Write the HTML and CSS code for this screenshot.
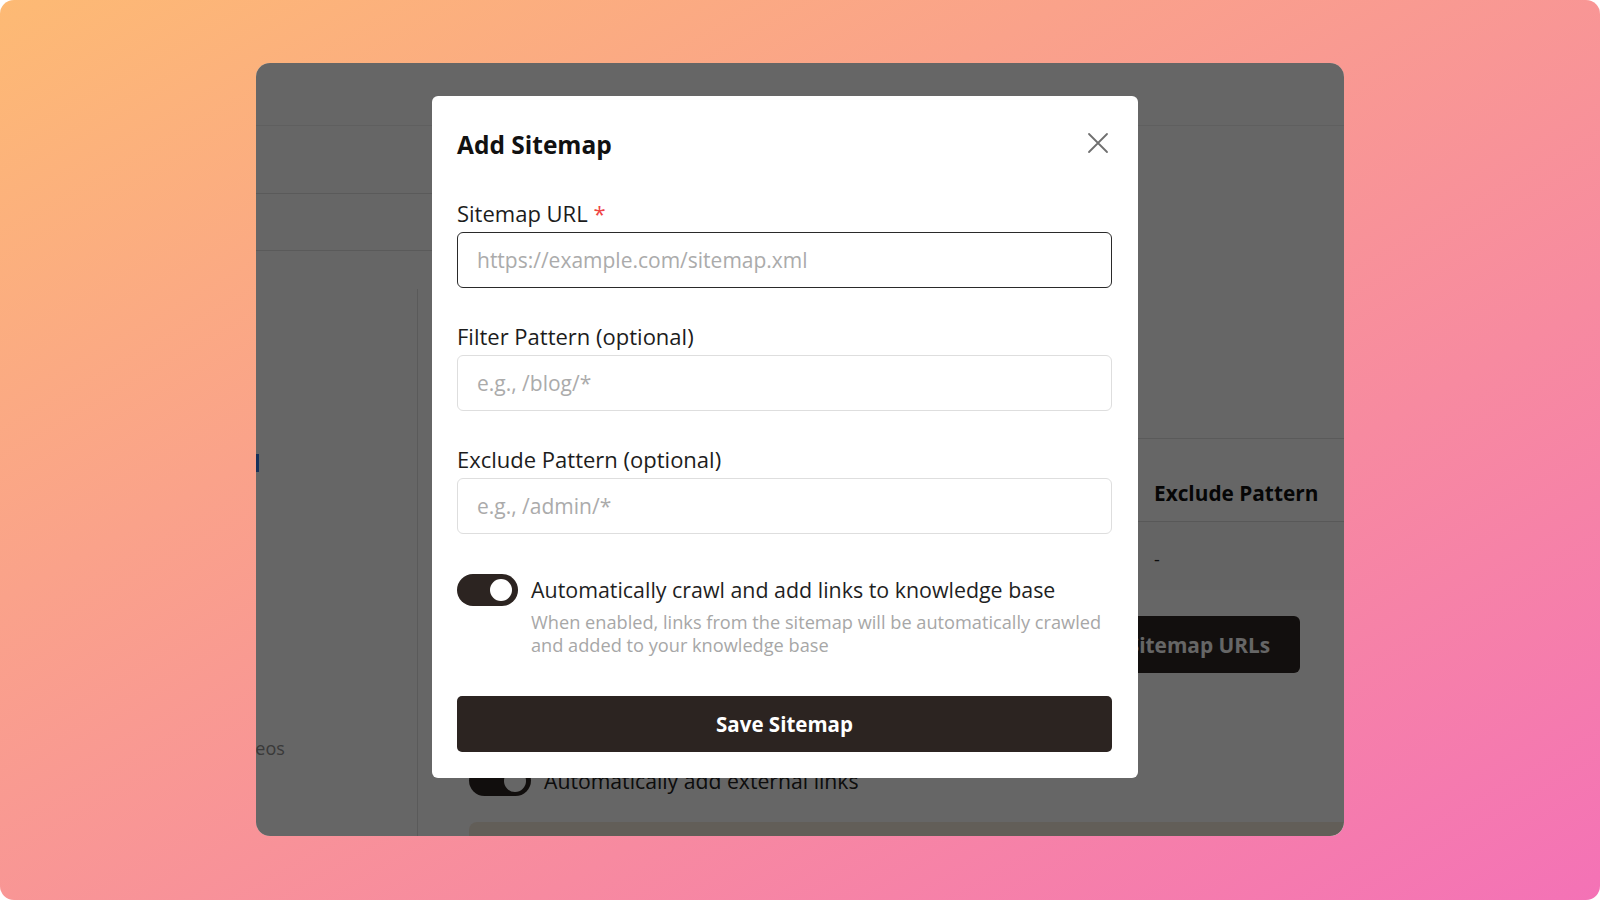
FILE: index.html
```html
<!DOCTYPE html>
<html lang="en">
<head>
<meta charset="utf-8">
<title>Add Sitemap</title>
<link rel="stylesheet" href="styles.css">
</head>
<body>
<div class="bg">
  <div class="window">
    <div class="app">
      <div class="app-header"></div>
      <div class="app-nav">
        <div class="nav-row nav-row-1"></div>
        <div class="nav-row nav-row-2"></div>
      </div>
      <div class="app-body">
        <aside class="sidebar">
          <div class="side-active"></div>
          <div class="side-item">Videos</div>
        </aside>
        <main class="main">
          <div class="table">
            <div class="t-head">
              <div class="t-cell c1"></div>
              <div class="t-cell c2"></div>
              <div class="t-cell c3">Exclude Pattern</div>
            </div>
            <div class="t-row">
              <div class="t-cell c1"></div>
              <div class="t-cell c2"></div>
              <div class="t-cell c3">-</div>
            </div>
          </div>
          <div class="main-actions">
            <button class="bg-btn">Fetch Sitemap URLs</button>
          </div>
          <div class="bg-toggle-row">
            <span class="bg-toggle"><span class="bg-knob"></span></span>
            <span class="bg-toggle-text">Automatically add external links</span>
          </div>
          <div class="bg-band"></div>
        </main>
      </div>
    </div>

    <div class="overlay">
      <div class="modal">
        <div class="modal-head">
          <h2 class="modal-title">Add Sitemap</h2>
          <button class="close" aria-label="Close">
            <svg width="24" height="24" viewBox="0 0 24 24" fill="none" stroke="#6f6f6f" stroke-width="1.8" stroke-linecap="round"><path d="M3 3L21 21M21 3L3 21"/></svg>
          </button>
        </div>
        <div class="form">
          <div class="field">
            <label class="label">Sitemap URL <span class="req">*</span></label>
            <div class="input input-focus"><span class="ph">https://example.com/sitemap.xml</span></div>
          </div>
          <div class="field">
            <label class="label">Filter Pattern (optional)</label>
            <div class="input"><span class="ph">e.g., /blog/*</span></div>
          </div>
          <div class="field">
            <label class="label">Exclude Pattern (optional)</label>
            <div class="input"><span class="ph">e.g., /admin/*</span></div>
          </div>
        </div>
        <div class="switch-row">
          <span class="switch"><span class="knob"></span></span>
          <div class="switch-text">
            <div class="switch-label">Automatically crawl and add links to knowledge base</div>
            <div class="switch-help">When enabled, links from the sitemap will be automatically crawled<br>and added to your knowledge base</div>
          </div>
        </div>
        <button class="save">Save Sitemap</button>
      </div>
    </div>
  </div>
</div>
</body>
</html>
```
FILE: styles.css
```css
* { box-sizing: border-box; }
html, body { margin: 0; padding: 0; background: #ffffff; }
body { font-family: "Open Sans", "Noto Sans", sans-serif; }

.bg {
  width: 1600px;
  height: 900px;
  border-radius: 14px;
  background: linear-gradient(to bottom right, #fdba74, #f472b6);
  padding: 63px 256px 64px 256px;
}

.window {
  position: relative;
  width: 1088px;
  height: 773px;
  border-radius: 14px;
  overflow: hidden;
  background: #ffffff;
}

/* ---------- background app ---------- */
.app { display: flex; flex-direction: column; height: 100%; }
.app-header { height: 63px; border-bottom: 1px solid #eeeeee; flex: none; }
.app-nav { width: 760px; flex: none; }
.nav-row { border-bottom: 1px solid #e0e0e0; }
.nav-row-1 { height: 68px; }
.nav-row-2 { height: 57px; }

.app-body { flex: 1; display: flex; margin-top: 38px; min-height: 0; }
.sidebar {
  width: 162px;
  flex: none;
  border-right: 1px solid #e2e2e2;
  display: flex;
  flex-direction: column;
}
.side-active {
  width: 3px;
  height: 18px;
  margin-top: 165px;
  background: #3b7be0;
}
.side-item {
  margin-top: 264px;
  margin-left: -27px;
  font-size: 18px;
  line-height: 24px;
  color: #8f8f8f;
  white-space: nowrap;
}

.main { flex: 1; min-width: 0; padding: 149px 44px 0 51px; display: flex; flex-direction: column; }
.table { width: 1100px; border-top: 1px solid #e2e2e2; flex: none; }
.t-head { display: flex; align-items: center; height: 83px; border-bottom: 1px solid #dcdcdc; }
.t-row { display: flex; align-items: center; height: 68px; background: #fafafa; }
.t-cell { white-space: nowrap; flex: none; }
.t-head .t-cell { font-weight: 700; font-size: 20.8px; line-height: 28px; color: #111111; padding-top: 26px; }
.t-row .t-cell { font-size: 18px; line-height: 24px; color: #222222; padding-top: 6px; }
.c1 { width: 340px; }
.c2 { width: 344px; }
.c3 { width: 300px; padding-left: 1px; }

.main-actions { display: flex; justify-content: flex-end; margin-top: 26px; }
.bg-btn {
  height: 57px;
  padding: 0 30px;
  border: none;
  border-radius: 6px;
  background: #2e2623;
  color: #ffffff;
  font-family: inherit;
  font-weight: 700;
  font-size: 20.8px;
}

.bg-toggle-row { display: flex; align-items: center; gap: 13px; margin-top: 92px; }
.bg-toggle {
  width: 62px; height: 31px; border-radius: 16px; background: #2c2421;
  display: flex; align-items: center; justify-content: flex-end; padding-right: 5px;
}
.bg-knob { width: 22px; height: 22px; border-radius: 50%; background: #ffffff; }
.bg-toggle-text { font-size: 21.2px; color: #222222; line-height: 30px; }

.bg-band {
  margin-top: 26px;
  height: 40px;
  margin-right: -60px;
  border-radius: 8px 0 0 0;
  background: #f6eadd;
}

/* ---------- overlay + modal ---------- */
.overlay {
  position: absolute;
  inset: 0;
  background: rgba(0, 0, 0, 0.6);
  padding: 33px 0 0 176px;
}

.modal {
  width: 706px;
  height: 682px;
  background: #ffffff;
  border-radius: 6px;
  padding: 32px 26px 26px 25px;
  display: flex;
  flex-direction: column;
}

.modal-head { display: flex; align-items: center; justify-content: space-between; height: 34px; }
.modal-title {
  margin: 0;
  font-size: 24.5px;
  line-height: 34px;
  font-weight: 700;
  color: #111111;
}
.close {
  width: 24px; height: 24px; padding: 0; margin-right: 2px; margin-top: -4px;
  border: none; background: none; display: flex;
}

.form { margin-top: 36px; display: flex; flex-direction: column; gap: 33px; }
.field { display: flex; flex-direction: column; gap: 4px; }
.label { display: block; height: 30px; font-size: 22px; line-height: 30px; color: #1c1c1c; }
.req { color: #ef4444; }
.input {
  height: 56px;
  border: 1.5px solid #dedede;
  border-radius: 6px;
  padding-left: 19px;
  display: flex;
  align-items: center;
}
.input-focus { border-color: #2a2a2a; }
.ph { font-size: 21px; color: #ababab; }

.switch-row { display: flex; gap: 13px; margin-top: 40px; }
.switch {
  width: 61px; height: 32px; flex: none; border-radius: 16px; background: #2c2421;
  display: flex; align-items: center; justify-content: flex-end; padding-right: 6px;
}
.knob { width: 22px; height: 22px; border-radius: 50%; background: #ffffff; }
.switch-text { padding-top: 1px; }
.switch-label { font-size: 21.4px; line-height: 30px; color: #1f1f1f; }
.switch-help { margin-top: 6px; font-size: 18.2px; line-height: 22.5px; color: #a7a7a7; }

.save {
  margin-top: 40px;
  height: 56px;
  border: none;
  border-radius: 5px;
  background: #2c2421;
  color: #ffffff;
  font-family: inherit;
  font-size: 20.5px;
  font-weight: 700;
}
```
